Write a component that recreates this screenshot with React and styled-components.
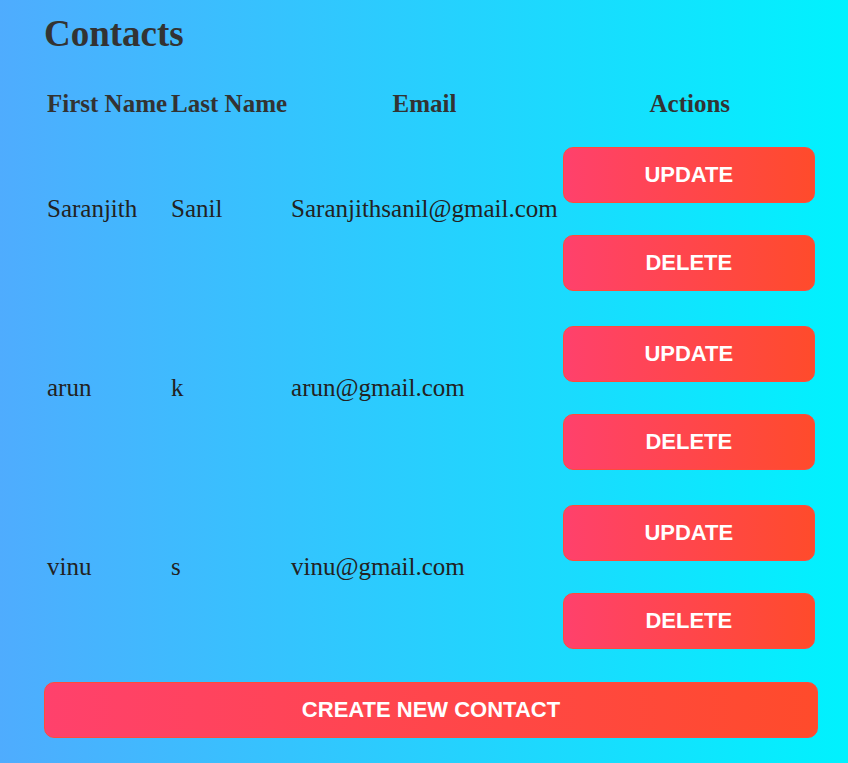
import React from 'react';
import styled, { createGlobalStyle } from 'styled-components';

const GlobalStyle = createGlobalStyle`
  html, body {
    margin: 0;
    padding: 0;
  }
  body {
    min-height: 100vh;
    background: linear-gradient(to right, #4facfe, #00f2fe);
    font-family: "Liberation Serif", "Times New Roman", serif;
  }
`;

const Page = styled.div`
  padding: 12px 0 0 44px;
  box-sizing: border-box;
  min-height: 100vh;
`;

const Wrapper = styled.div`
  display: inline-block;
`;

const Title = styled.h1`
  margin: 0 0 21px;
  font-size: 37px;
  font-weight: bold;
  color: #333;
`;

const Table = styled.table`
  border-spacing: 2px;
  font-size: 25px;
`;

const Head = styled.th`
  padding: 11.5px 1px;
  font-weight: bold;
  color: #333;
  text-align: ${(p) => (p.center ? 'center' : 'left')};
  white-space: nowrap;
`;

const Cell = styled.td`
  padding: 1px 1px 22px;
  color: #222;
  vertical-align: middle;
  white-space: nowrap;
`;

const ActionCell = styled.td`
  padding: 1px;
  vertical-align: middle;
`;

const Actions = styled.div`
  display: flex;
  flex-direction: column;
  gap: 32px;
  padding: 15px 3px 16px 1px;
`;

const Button = styled.button`
  width: ${(p) => (p.wide ? '100%' : '252px')};
  height: 56px;
  border: 1px solid #ff4b3a;
  border-radius: 10px;
  background: linear-gradient(to right, #ff416c, #ff4b2b);
  color: #fff;
  font-family: "Liberation Sans", Arial, sans-serif;
  font-size: 22px;
  font-weight: bold;
  cursor: pointer;
  padding: 0;
`;

const Footer = styled.div`
  margin-top: 14px;
  width: 774px;
`;

const contacts = [
  { id: 1, first: 'Saranjith', last: 'Sanil', email: 'Saranjithsanil@gmail.com' },
  { id: 2, first: 'arun', last: 'k', email: 'arun@gmail.com' },
  { id: 3, first: 'vinu', last: 's', email: 'vinu@gmail.com' },
];

const App = () => {
  return (
    <>
      <GlobalStyle />
      <Page>
        <Wrapper>
          <Title>Contacts</Title>
          <Table>
            <thead>
              <tr>
                <Head>First Name</Head>
                <Head>Last Name</Head>
                <Head center>Email</Head>
                <Head center>Actions</Head>
              </tr>
            </thead>
            <tbody>
              {contacts.map((c) => (
                <tr key={c.id}>
                  <Cell>{c.first}</Cell>
                  <Cell>{c.last}</Cell>
                  <Cell>{c.email}</Cell>
                  <ActionCell>
                    <Actions>
                      <Button>UPDATE</Button>
                      <Button>DELETE</Button>
                    </Actions>
                  </ActionCell>
                </tr>
              ))}
            </tbody>
          </Table>
          <Footer>
            <Button wide>CREATE NEW CONTACT</Button>
          </Footer>
        </Wrapper>
      </Page>
    </>
  );
};

export default App;
